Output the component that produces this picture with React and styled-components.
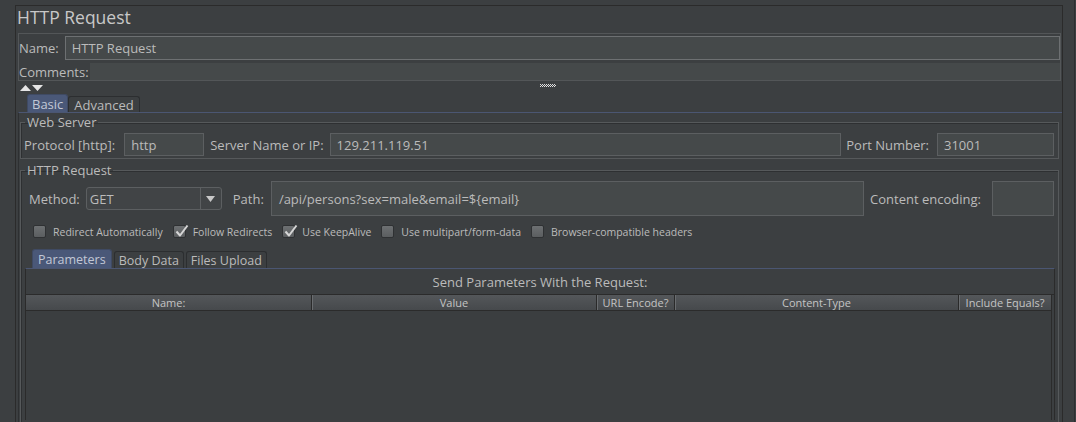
import React from 'react';
import styled, { createGlobalStyle } from 'styled-components';

const GlobalStyle = createGlobalStyle`
  html, body { margin: 0; padding: 0; background: #3c3f41; }
  body {
    width: 1076px; height: 422px; overflow: hidden;
    font-family: "Open Sans", "DejaVu Sans", sans-serif;
    color: #bbbbbb;
  }
  * { box-sizing: border-box; }
`;

const Window = styled.div`
  width: 1075px;
  height: 422px;
  border-right: 1px solid #2d2f31;
  padding: 5px 11px 0 15px;
  overflow: hidden;
`;

const Panel = styled.div`
  height: 100%;
  border: 1px solid #2b2b2b;
  border-bottom: none;
  display: flex;
  flex-direction: column;
`;

const Title = styled.div`
  font-size: 17.5px;
  line-height: 23px;
  padding: 0 0 4px 1px;
  color: #c8c8c8;
`;

const NameBox = styled.div`
  margin: 0 1px 0 2px;
  border: 1px solid #535658;
  padding-top: 2px;
  display: flex;
  flex-direction: column;
`;

const NameRow = styled.div`
  display: flex;
  align-items: center;
  gap: ${p => p.$gap}px;
  height: ${p => p.$h}px;
  margin-top: ${p => p.$mt || 0}px;
  font-size: 13px;
`;

const Text = styled.span`
  white-space: nowrap;
  font-size: 13px;
`;

const Field = styled.div`
  flex: ${p => (p.$w ? `0 0 ${p.$w}px` : '1')};
  height: ${p => p.$h}px;
  background: #45494a;
  border: ${p => (p.$noBorder ? 'none' : `1px solid ${p.$light ? '#6d7072' : '#5c5f61'}`)};
  display: flex;
  align-items: center;
  padding-left: ${p => p.$pl || 6}px;
  font-size: 13px;
  color: #bbbbbb;
  white-space: nowrap;
  overflow: hidden;
`;

const Splitter = styled.div`
  height: 13px;
  display: flex;
  align-items: center;
  padding-left: 4px;
`;

const Grip = styled.svg`
  margin-left: 496px;
  margin-top: -3px;
`;

const TabStrip = styled.div`
  display: flex;
  align-items: flex-end;
  gap: ${p => p.$gap}px;
  padding-left: ${p => p.$pl}px;
  margin-top: ${p => p.$mt || 0}px;
  height: ${p => p.$h}px;
`;

const Tab = styled.div`
  height: ${p => (p.$active ? p.$h + 2 : p.$h)}px;
  padding: 0 ${p => p.$px}px;
  display: flex;
  align-items: center;
  font-size: ${p => p.$size}px;
  color: ${p => (p.$active ? '#c2c8d6' : '#bbbbbb')};
  background: ${p => (p.$active ? '#4a5878' : '#3c3f41')};
  border: 1px solid ${p => (p.$active ? '#3f4a63' : '#2c2e30')};
  border-bottom: none;
  border-radius: 3px 3px 0 0;
  white-space: nowrap;
`;

const TabBody = styled.div`
  flex: 1;
  margin-left: 2px;
  border-top: 1px solid #4b5672;
  border-left: 1px solid #2e3032;
  padding: 3px 3px 0 1px;
  display: flex;
  flex-direction: column;
`;

const Group = styled.fieldset`
  margin: ${p => p.$mt || 0}px 0 0 0;
  padding: 0 4px 2px ${p => p.$pl}px;
  border: 1px solid #56595b;
  box-shadow: inset 1px 1px 0 #2e3032;
  min-width: 0;
  display: flex;
  flex-direction: column;
  ${p => (p.$grow ? 'flex: 1; border-bottom: none;' : '')}
`;

const Legend = styled.legend`
  padding: 0 2px;
  margin-left: ${p => p.$ml}px;
  font-size: 13px;
  line-height: 13px;
  color: #bbbbbb;
`;

const Row = styled.div`
  display: flex;
  align-items: center;
  height: ${p => p.$h}px;
  margin-top: ${p => p.$mt || 0}px;
`;

const Gap = styled.div`
  flex: 0 0 ${p => p.$w}px;
`;

const Combo = styled.div`
  flex: 0 0 136px;
  height: 23px;
  border: 1px solid #5c5f61;
  border-radius: 3px;
  background: #414446;
  display: flex;
  align-items: center;
  font-size: 13px;
`;

const ComboText = styled.div`
  flex: 1;
  padding-left: 3px;
`;

const ComboArrow = styled.div`
  width: 21px;
  height: 100%;
  border-left: 1px solid #5c5f61;
  display: flex;
  align-items: center;
  justify-content: center;
`;

const Checks = styled.div`
  display: flex;
  align-items: center;
  height: 13px;
  margin-top: 9px;
  padding-left: 4px;
  gap: 10px;
`;

const CheckItem = styled.label`
  display: flex;
  align-items: center;
  gap: 7px;
  font-size: 10.5px;
  white-space: nowrap;
`;

const Box = styled.span`
  position: relative;
  width: 13px;
  height: 13px;
  border: 1px solid #2f3133;
  border-radius: 2px;
  background: linear-gradient(#6d7072, #5b5e60);
  display: inline-block;
`;

const Tick = styled.svg`
  position: absolute;
  left: 0px;
  top: -3px;
`;

const ParamPanel = styled.div`
  flex: 1;
  margin: 0 -1px 0 -4px;
  border-top: 1px solid #4b5672;
  border-left: 1px solid #2b2b2b;
  border-right: 1px solid #2b2b2b;
  display: flex;
  flex-direction: column;
`;

const ParamTitle = styled.div`
  height: 26px;
  display: flex;
  align-items: center;
  justify-content: center;
  font-size: 13px;
  padding-top: 1px;
  border-bottom: 1px solid #2b2b2b;
`;

const Table = styled.div`
  flex: 1;
  margin-right: 2px;
  border-right: 1px solid #2b2b2b;
  display: flex;
  flex-direction: column;
`;

const Header = styled.div`
  display: grid;
  grid-template-columns: 286px 285px 78px 284px 1fr;
  height: 16px;
  background: linear-gradient(#54575a, #46494c);
  border-bottom: 1px solid #2b2b2b;
`;

const HeadCell = styled.div`
  font-size: 11px;
  display: flex;
  align-items: center;
  justify-content: center;
  white-space: nowrap;
  color: #c4c4c4;
  border-right: ${p => (p.$last ? 'none' : '1px solid #2a2a2a')};
  box-shadow: ${p => (p.$first ? 'none' : 'inset 1px 0 0 #6a6d70')};
`;

const TableBody = styled.div`
  flex: 1;
  background: #3b3e40;
`;

const Check = ({ checked, label }) => (
  <CheckItem>
    <Box>
      {checked && (
        <Tick width="16" height="16" viewBox="0 0 16 16">
          <path d="M2.5 8.5 L6 12.5 L13.5 2.5" fill="none" stroke="#d6d6d6" strokeWidth="2" strokeLinejoin="round" />
        </Tick>
      )}
    </Box>
    {label}
  </CheckItem>
);

export default function App() {
  return (
    <>
      <GlobalStyle />
      <Window>
        <Panel>
          <Title>HTTP Request</Title>
          <NameBox>
            <NameRow $h={24} $gap={6}>
              <Text>Name:</Text>
              <Field $h={24} $light>HTTP Request</Field>
            </NameRow>
            <NameRow $h={17} $gap={1} $mt={3}>
              <Text>Comments:</Text>
              <Field $h={17} $noBorder />
            </NameRow>
          </NameBox>
          <Splitter>
            <svg width="24" height="8" viewBox="0 0 24 8">
              <path d="M0 7 L5.5 1 L11 7 Z" fill="#e6e6e6" />
              <path d="M12 1 L23 1 L17.5 7 Z" fill="#e6e6e6" />
            </svg>
            <Grip width="16" height="5" viewBox="0 0 16 5">
              {[0, 2, 4, 6, 8, 10, 12, 14].map(x => (
                <rect key={'a' + x} x={x} y="0" width="1" height="1" fill="#e0e0e0" />
              ))}
              {[1, 3, 5, 7, 9, 11, 13, 15].map(x => (
                <rect key={'b' + x} x={x} y="1" width="1" height="1" fill="#e0e0e0" />
              ))}
              {[0, 2, 4, 6, 8, 10, 12, 14].map(x => (
                <rect key={'c' + x} x={x} y="2" width="1" height="1" fill="#e0e0e0" />
              ))}
            </Grip>
          </Splitter>
          <TabStrip $gap={0} $pl={11} $h={18}>
            <Tab $active $h={16} $px={4} $size={13}>Basic</Tab>
            <Tab $h={16} $px={5} $size={13}>Advanced</Tab>
          </TabStrip>
          <TabBody>
            <Group $pl={3}>
              <Legend $ml={1}>Web Server</Legend>
              <Row $h={23} $mt={4}>
                <Text>Protocol [http]:</Text>
                <Gap $w={9} />
                <Field $w={80} $h={23} $pl={6}>http</Field>
                <Gap $w={6} />
                <Text>Server Name or IP:</Text>
                <Gap $w={6} />
                <Field $h={23} $pl={6}>129.211.119.51</Field>
                <Gap $w={5} />
                <Text>Port Number:</Text>
                <Gap $w={8} />
                <Field $w={117} $h={23} $pl={6}>31001</Field>
              </Row>
            </Group>
            <Group $pl={8} $mt={5} $grow>
              <Legend $ml={-4}>HTTP Request</Legend>
              <Row $h={35} $mt={4}>
                <Text>Method:</Text>
                <Gap $w={6} />
                <Combo>
                  <ComboText>GET</ComboText>
                  <ComboArrow>
                    <svg width="9" height="6" viewBox="0 0 9 6">
                      <path d="M0 0 L9 0 L4.5 6 Z" fill="#c8c8c8" />
                    </svg>
                  </ComboArrow>
                </Combo>
                <Gap $w={11} />
                <Text>Path:</Text>
                <Gap $w={7} />
                <Field $h={35} $pl={7}>/api/persons?sex=male&amp;email=${'{email}'}</Field>
                <Gap $w={6} />
                <Text>Content encoding:</Text>
                <Gap $w={11} />
                <Field $w={62} $h={35} />
              </Row>
              <Checks>
                <Check label="Redirect Automatically" />
                <Check checked label="Follow Redirects" />
                <Check checked label="Use KeepAlive" />
                <Check label="Use multipart/form-data" />
                <Check label="Browser-compatible headers" />
              </Checks>
              <TabStrip $gap={2} $pl={3} $mt={11} $h={19}>
                <Tab $active $h={17} $px={5} $size={12.5}>Parameters</Tab>
                <Tab $h={17} $px={4} $size={12.5}>Body Data</Tab>
                <Tab $h={17} $px={4} $size={12.5}>Files Upload</Tab>
              </TabStrip>
              <ParamPanel>
                <ParamTitle>Send Parameters With the Request:</ParamTitle>
                <Table>
                  <Header>
                    <HeadCell $first>Name:</HeadCell>
                    <HeadCell>Value</HeadCell>
                    <HeadCell>URL Encode?</HeadCell>
                    <HeadCell>Content-Type</HeadCell>
                    <HeadCell $last>Include Equals?</HeadCell>
                  </Header>
                  <TableBody />
                </Table>
              </ParamPanel>
            </Group>
          </TabBody>
        </Panel>
      </Window>
    </>
  );
}
